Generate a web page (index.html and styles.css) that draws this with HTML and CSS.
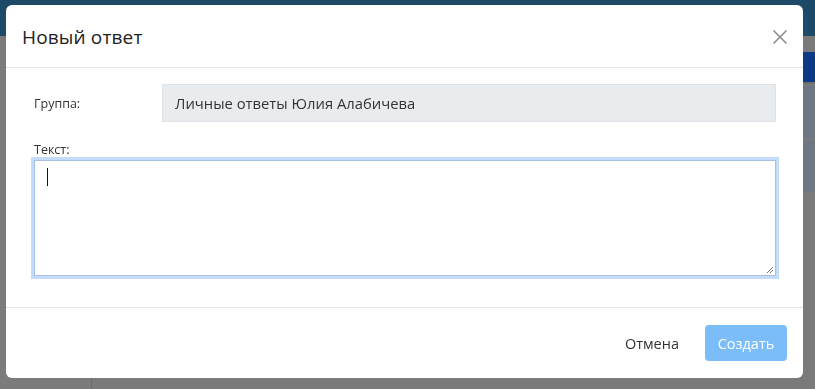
FILE: index.html
```html
<!DOCTYPE html>
<html lang="ru">
<head>
<meta charset="utf-8">
<title>Новый ответ</title>
<link rel="stylesheet" href="styles.css">
</head>
<body>
<div class="app">
  <div class="topbar"></div>
  <div class="app-body">
    <div class="side"></div>
    <div class="main">
      <div class="main-bar"><span class="main-btn"></span></div>
      <div class="panel"></div>
      <div class="panel"></div>
    </div>
  </div>
</div>

<div class="overlay">
  <div class="modal">
    <div class="modal-header">
      <h2 class="modal-title">Новый ответ</h2>
      <button class="close" aria-label="Закрыть">
        <svg width="16" height="16" viewBox="0 0 16 16"><path d="M1.5 1.5L14.5 14.5M14.5 1.5L1.5 14.5" stroke="#8a8a8a" stroke-width="1.5" fill="none"/></svg>
      </button>
    </div>
    <div class="modal-body">
      <div class="row">
        <label class="label">Группа:</label>
        <div class="readonly">Личные ответы Юлия Алабичева</div>
      </div>
      <div class="field">
        <label class="label label-top">Текст:</label>
        <div class="textarea">
          <span class="caret"></span>
          <svg class="grip" width="8" height="8" viewBox="0 0 8 8"><path d="M7 1L1 7M7 4L4 7" stroke="#666" stroke-width="0.9" fill="none"/></svg>
        </div>
      </div>
    </div>
    <div class="modal-footer">
      <button class="btn-cancel">Отмена</button>
      <button class="btn-create">Создать</button>
    </div>
  </div>
</div>
</body>
</html>
```
FILE: styles.css
```css
* { box-sizing: border-box; }
html, body { margin: 0; padding: 0; }
body {
  width: 815px;
  height: 389px;
  overflow: hidden;
  font-family: "Open Sans", "Noto Sans", sans-serif;
  background: #7a7a7a;
}
.app { display: flex; flex-direction: column; height: 389px; }
.topbar { height: 36px; background: #1d4a69; }
.app-body { flex: 1; display: flex; }
.side { width: 92px; background: #7b7b7b; border-right: 1px solid #6c6c6c; }
.main { flex: 1; display: flex; flex-direction: column; gap: 2px; padding-top: 16px; }
.main-bar { height: 32px; display: flex; justify-content: flex-end; border-bottom: 2px solid #6f6f6f; }
.main-btn { width: 40px; background: #0d3a86; }
.panel { height: 52px; margin-left: 8px; background: #6f7783; }

.overlay {
  position: fixed;
  inset: 0;
  padding: 5px 0 0 6px;
}
.modal {
  width: 797px;
  height: 373px;
  background: #fff;
  border-radius: 6px;
  display: flex;
  flex-direction: column;
}
.modal-header {
  height: 63px;
  border-bottom: 1px solid #e3e3e3;
  display: flex;
  align-items: center;
  justify-content: space-between;
  padding: 2px 14px 0 16px;
}
.modal-title {
  margin: 0;
  font-size: 19px;
  font-weight: 400;
  color: #222;
  letter-spacing: 0.15px;
}
.close {
  border: 0;
  background: none;
  padding: 0;
  width: 18px;
  height: 18px;
  display: flex;
  align-items: center;
  justify-content: center;
}
.modal-body {
  flex: 1;
  padding: 16px 27px 0 28px;
  border-bottom: 1px solid #e3e3e3;
}
.row { display: flex; align-items: center; }
.label {
  font-size: 12.5px;
  color: #333;
  width: 128px;
  flex: none;
}
.readonly {
  flex: 1;
  height: 38px;
  background: #e9ecef;
  border: 1px solid #e0e3e7;
  display: flex;
  align-items: center;
  padding-left: 12px;
  font-size: 14.8px;
  color: #333;
}
.field { margin-top: 20px; }
.label-top { display: block; line-height: 16px; height: 18px; }
.textarea {
  position: relative;
  height: 116px;
  border: 1px solid #a9c0de;
  box-shadow: 0 0 0 3px #c3dcfb;
  background: #fff;
  padding: 7px 12px;
}
.caret { display: block; width: 1px; height: 18px; background: #111; }
.grip { position: absolute; right: 1px; bottom: 1px; }
.modal-footer {
  height: 70px;
  display: flex;
  align-items: center;
  justify-content: flex-end;
  padding: 0 16px 0 0;
  gap: 14px;
}
.btn-cancel {
  border: 0;
  background: none;
  font-family: inherit;
  font-size: 14.5px;
  color: #333;
  padding: 0 12px;
  height: 36px;
}
.btn-create {
  border: 0;
  height: 36px;
  width: 82px;
  border-radius: 4px;
  background: #7bbdf9;
  color: #fff;
  font-family: inherit;
  font-size: 14.5px;
}
```
